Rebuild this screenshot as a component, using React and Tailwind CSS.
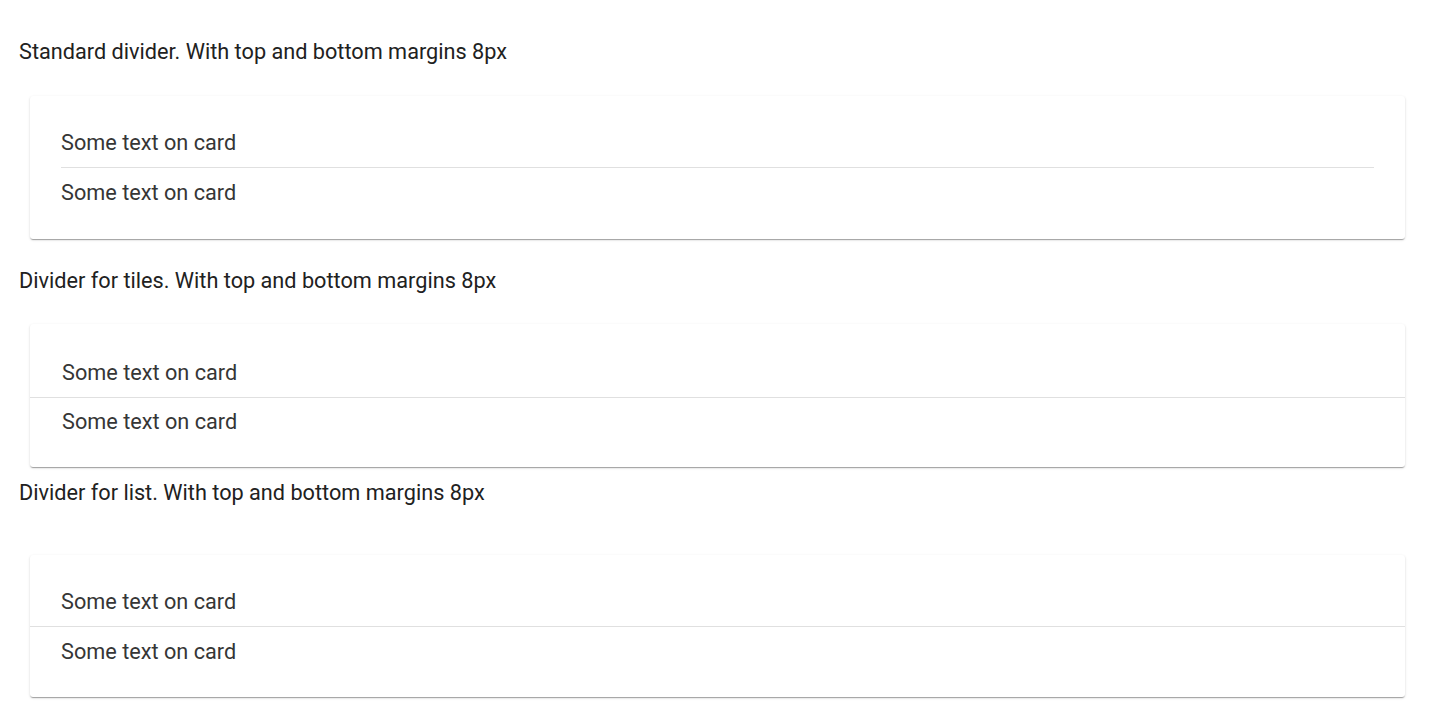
const cardShadow =
  "bg-white rounded-[3px] shadow-[0_2px_1px_-1px_rgba(0,0,0,0.2),0_1px_1px_0_rgba(0,0,0,0.14),0_1px_3px_0_rgba(0,0,0,0.12)]";

const Heading = ({ children, className }) => (
  <h2 className={`pl-[19px] text-[21.7px] leading-6 font-normal text-[#212121] ${className}`}>
    {children}
  </h2>
);

const CardText = ({ children }) => (
  <p className="text-[21.7px] leading-6 text-[#363636]">{children}</p>
);

// Divider inset by the card padding
const StandardCard = () => (
  <div className={`ml-[30px] mr-[24px] mt-[32px] px-[31px] pt-[35px] pb-[34px] ${cardShadow}`}>
    <CardText>Some text on card</CardText>
    <hr className="mt-[12px] mb-[13px] border-0 border-t border-[#e0e0e0]" />
    <CardText>Some text on card</CardText>
  </div>
);

// Divider spans the full card width
const TilesCard = () => (
  <div className={`ml-[30px] mr-[24px] mt-[31px] pt-[37px] pb-[33px] ${cardShadow}`}>
    <div className="px-[32px]">
      <CardText>Some text on card</CardText>
    </div>
    <hr className="mt-[12px] mb-[12px] border-0 border-t border-[#e0e0e0]" />
    <div className="px-[32px]">
      <CardText>Some text on card</CardText>
    </div>
  </div>
);

const ListCard = () => (
  <div className={`ml-[30px] mr-[24px] mt-[50px] pt-[35px] pb-[33px] ${cardShadow}`}>
    <div className="px-[31px]">
      <CardText>Some text on card</CardText>
    </div>
    <hr className="mt-[12px] mb-[13px] border-0 border-t border-[#e0e0e0]" />
    <div className="px-[31px]">
      <CardText>Some text on card</CardText>
    </div>
  </div>
);

export default function App() {
  return (
    <div className="min-h-screen bg-white font-['Roboto',sans-serif] pb-[8px]">
      <Heading className="pt-[40px]">Standard divider. With top and bottom margins 8px</Heading>
      <StandardCard />

      <Heading className="mt-[30px]">Divider for tiles. With top and bottom margins 8px</Heading>
      <TilesCard />

      <Heading className="mt-[14px]">Divider for list. With top and bottom margins 8px</Heading>
      <ListCard />
    </div>
  );
}
